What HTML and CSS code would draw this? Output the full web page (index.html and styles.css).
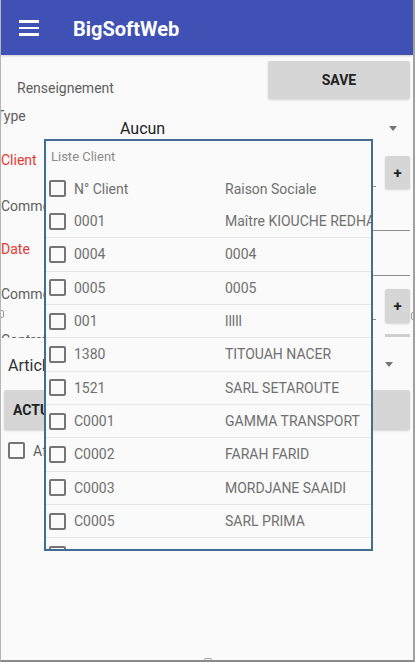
FILE: index.html
```html
<!DOCTYPE html>
<html lang="fr">
<head>
<meta charset="utf-8">
<title>BigSoftWeb</title>
<link rel="stylesheet" href="styles.css">
</head>
<body>
<div class="frame">
  <header class="appbar">
    <span class="burger"><i></i><i></i><i></i></span>
    <h1 class="title">BigSoftWeb</h1>
  </header>
  <main class="form">
    <div class="row r-top">
      <span class="lbl sec">Renseignement</span>
      <button class="btn save">SAVE</button>
    </div>
    <div class="row r-type">
      <span class="lbl lbl-fixed type">Type</span>
      <div class="select"><span class="sel-text">Aucun</span><i class="caret"></i></div>
    </div>
    <div class="row r-client">
      <span class="lbl lbl-fixed req">Client</span>
      <div class="input in-client"></div>
      <button class="btn plus">+</button>
    </div>
    <div class="row r-comm">
      <span class="lbl lbl-fixed">Commercial</span>
      <div class="input in-comm"></div>
    </div>
    <div class="row r-date">
      <span class="lbl lbl-fixed req">Date</span>
      <div class="input in-date"></div>
    </div>
    <div class="row r-comm2">
      <span class="lbl lbl-fixed">Commentaire</span>
      <div class="input in-comm2"></div>
      <button class="btn plus plus2">+</button>
    </div>
    <div class="row r-contro">
      <span class="clip"><span class="lbl">Contrat</span></span>
      <span class="btn-top"></span>
    </div>
    <div class="row r-artic">
      <span class="lbl big">Article</span>
      <i class="caret caret2"></i>
    </div>
    <button class="btn actu">ACTUALISER</button>
    <label class="row r-check"><span class="cb"></span><span class="lbl">Afficher tout</span></label>
  </main>

  <section class="popup">
    <div class="pop-title">Liste Client</div>
    <div class="prow head"><span class="cb"></span><span class="c-code">N° Client</span><span class="c-name">Raison Sociale</span></div>
    <div class="plist">
      <div class="prow"><span class="cb"></span><span class="c-code">0001</span><span class="c-name">Maître KIOUCHE REDHA</span></div>
      <div class="prow"><span class="cb"></span><span class="c-code">0004</span><span class="c-name">0004</span></div>
      <div class="prow"><span class="cb"></span><span class="c-code">0005</span><span class="c-name">0005</span></div>
      <div class="prow"><span class="cb"></span><span class="c-code">001</span><span class="c-name">lllll</span></div>
      <div class="prow"><span class="cb"></span><span class="c-code">1380</span><span class="c-name">TITOUAH NACER</span></div>
      <div class="prow"><span class="cb"></span><span class="c-code">1521</span><span class="c-name">SARL SETAROUTE</span></div>
      <div class="prow"><span class="cb"></span><span class="c-code">C0001</span><span class="c-name">GAMMA TRANSPORT</span></div>
      <div class="prow"><span class="cb"></span><span class="c-code">C0002</span><span class="c-name">FARAH FARID</span></div>
      <div class="prow"><span class="cb"></span><span class="c-code">C0003</span><span class="c-name">MORDJANE SAAIDI</span></div>
      <div class="prow"><span class="cb"></span><span class="c-code">C0005</span><span class="c-name">SARL PRIMA</span></div>
      <div class="prow"><span class="cb"></span></div>
    </div>
  </section>

  <span class="handle h-left"></span>
  <span class="handle h-right"></span>
  <span class="handle h-bottom"></span>
</div>
</body>
</html>
```

FILE: styles.css
```css
* { box-sizing: border-box; }
html, body { margin: 0; padding: 0; }
body {
  font-family: Roboto, "Noto Sans", "Liberation Sans", sans-serif;
  background: #fafafa;
}
.frame {
  position: relative;
  width: 415px;
  height: 662px;
  overflow: hidden;
  background: #fafafa;
  border-left: 1px solid #b5b5b5;
  border-right: 2px solid #a0a0a0;
  border-bottom: 2px solid #8a8a8a;
}
.appbar {
  height: 55px;
  background: #3f51b5;
  display: flex;
  align-items: center;
  box-shadow: 0 1px 2px rgba(0,0,0,0.18);
}
.burger {
  display: flex;
  flex-direction: column;
  gap: 4px;
  margin-left: 18px;
  width: 20px;
  margin-top: 1px;
}
.burger i {
  display: block;
  height: 2.5px;
  background: #fff;
}
.title {
  margin: 0 0 0 34px;
  color: #fff;
  font-size: 20px;
  font-weight: 700;
  line-height: 24px;
  margin-top: 2px;
}
.form { display: flex; flex-direction: column; }
.row { display: flex; align-items: flex-start; }
.lbl {
  font-size: 14px;
  line-height: 16px;
  color: #5f5f5f;
  white-space: nowrap;
}
.lbl-fixed { width: 44px; flex: none; }
.req { color: #e53935; }
.btn {
  border: none;
  background: #d6d6d6;
  font-family: inherit;
  font-weight: 700;
  font-size: 14px;
  color: #222;
  border-radius: 2px;
  padding: 0;
}
.r-top { height: 50px; }
.r-top .sec { margin: 25px 0 0 16px; }
.save {
  margin: 6px 3px 0 auto;
  width: 142px;
  height: 38px;
  box-shadow: 0 1px 2px rgba(0,0,0,0.15);
}
.r-type { height: 35px; }
.type { margin: 3px 0 0 -5px; width: 49px; }
.select {
  flex: 1;
  margin: 13px 3px 0 0;
  height: 20px;
  display: flex;
  align-items: center;
  padding: 0 13px 0 75px;
}
.sel-text { font-size: 16px; color: #222; }
.caret {
  margin-left: auto;
  width: 0; height: 0;
  border-left: 4.5px solid transparent;
  border-right: 4.5px solid transparent;
  border-top: 5px solid #757575;
}
.input {
  flex: 1;
  border-bottom: 1px solid #8e8e8e;
}
.r-client { height: 55px; }
.r-client .lbl { margin-top: 12px; }
.in-client { height: 47px; }
.plus {
  width: 25px;
  height: 33px;
  margin: 16px 3px 0 9px;
  font-size: 15px;
  box-shadow: 0 1px 2px rgba(0,0,0,0.15);
}
.r-comm { height: 43px; }
.r-comm .lbl { margin-top: 3px; }
.in-comm { height: 36px; margin-right: 3px; }
.r-date { height: 44px; }
.r-date .lbl { margin-top: 3px; }
.in-date { height: 38px; margin-right: 3px; }
.r-comm2 { height: 46px; }
.r-comm2 .lbl { margin-top: 4px; }
.in-comm2 { height: 38px; }
.plus2 { margin-top: 7px; height: 34px; }
.r-contro { height: 17px; }
.clip {
  display: block;
  height: 8px;
  overflow: hidden;
  margin-top: 2px;
}
.btn-top {
  margin: 6px 3px 0 auto;
  width: 25px;
  height: 3px;
  background: #cfcfcf;
}
.r-artic { height: 40px; }
.big { font-size: 16px; line-height: 18px; color: #333; margin: 12px 0 0 7px; }
.caret2 { margin: 17px 20px 0 auto; }
.actu {
  margin: 5px 3px 0 3px;
  height: 40px;
  text-align: left;
  padding-left: 9px;
  box-shadow: 0 1px 2px rgba(0,0,0,0.15);
}
.r-check { margin: 12px 0 0 7px; gap: 8px; align-items: center; }
.cb {
  flex: none;
  display: block;
  width: 17px;
  height: 17px;
  border: 2px solid #757575;
  border-radius: 2px;
}
.popup {
  position: absolute;
  left: 43px;
  top: 139px;
  width: 329px;
  height: 412px;
  border: 2px solid #416d93;
  background: #fafafa;
  overflow: hidden;
}
.pop-title {
  height: 31px;
  padding-left: 5px;
  font-size: 13px;
  line-height: 31px;
  color: #8a8a8a;
}
.prow {
  display: flex;
  align-items: center;
  height: 33.33px;
  padding-left: 3px;
  font-size: 14px;
  color: #707070;
  white-space: nowrap;
}
.prow.head { height: 33px; }
.plist .prow { border-bottom: 1px solid #e4e4e4; }
.prow .cb { margin-right: 8px; }
.c-code { width: 151px; flex: none; }
.c-name { flex: none; }
.handle {
  position: absolute;
  width: 6px;
  height: 8px;
  background: #fff;
  border: 1px solid #9a9a9a;
  border-radius: 2px;
}
.h-left { left: -3px; top: 310px; }
.h-right { right: -4px; top: 312px; }
.h-bottom { left: 203px; bottom: -4px; width: 8px; height: 6px; }
```
